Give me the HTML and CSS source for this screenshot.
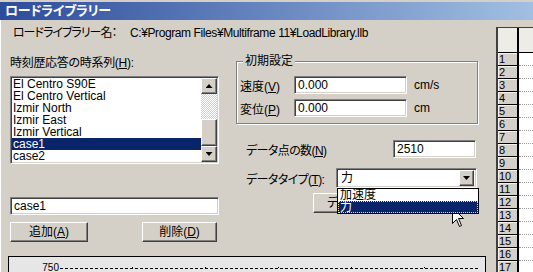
FILE: index.html
```html
<!DOCTYPE html>
<html lang="ja">
<head>
    <meta charset="UTF-8">
    <title>ロードライブラリー</title>
    <link rel="stylesheet" href="styles.css">
</head>
<body>
    <div class="window">
        <div class="titlebar">ロードライブラリー</div>
        <div class="client">
            <div class="dialog">
                <div class="libname">
                    <span class="libname-label">ロードライブラリー名：</span>
                    <span class="libname-path">C:¥Program Files¥Multiframe 11¥LoadLibrary.llb</span>
                </div>
                <div class="columns">
                    <div class="col-left">
                        <div class="caption">時刻歴応答の時系列(<u>H</u>):</div>
                        <div class="listbox">
                            <div class="items">
                                <div class="item">El Centro S90E</div>
                                <div class="item">El Centro Vertical</div>
                                <div class="item">Izmir North</div>
                                <div class="item">Izmir East</div>
                                <div class="item">Izmir Vertical</div>
                                <div class="item selected">case1</div>
                                <div class="item">case2</div>
                            </div>
                            <div class="vscroll">
                                <div class="sb-btn"><span class="tri-up"></span></div>
                                <div class="sb-track sb-before"></div>
                                <div class="sb-thumb"></div>
                                <div class="sb-track"></div>
                                <div class="sb-btn"><span class="tri-down"></span></div>
                            </div>
                        </div>
                        <div class="edit name-edit">case1</div>
                        <div class="buttons">
                            <div class="button add-btn">追加(<u>A</u>)</div>
                            <div class="button del-btn">削除(<u>D</u>)</div>
                        </div>
                    </div>
                    <div class="col-right">
                        <div class="group">
                            <div class="group-title">初期設定</div>
                            <div class="group-rows">
                                <div class="frow">
                                    <span class="flabel">速度(<u>V</u>)</span>
                                    <div class="edit init-edit">0.000</div>
                                    <span class="unit">cm/s</span>
                                </div>
                                <div class="frow">
                                    <span class="flabel">変位(<u>P</u>)</span>
                                    <div class="edit init-edit">0.000</div>
                                    <span class="unit">cm</span>
                                </div>
                            </div>
                        </div>
                        <div class="drow points-row">
                            <span class="dlabel">データ点の数(<u>N</u>)</span>
                            <div class="edit points-edit">2510</div>
                        </div>
                        <div class="drow type-row">
                            <span class="dlabel">データタイプ(<u>T</u>):</span>
                            <div class="combo">
                                <span class="combo-text">力</span>
                                <div class="sb-btn combo-btn"><span class="tri-down"></span></div>
                                <div class="dropdown">
                                    <div class="dd-item">加速度</div>
                                    <div class="dd-item selected">力</div>
                                </div>
                            </div>
                        </div>
                        <div class="button data-btn">データ表示</div>
                    </div>
                </div>
                <div class="chart">
                    <div class="axis-row">
                        <span class="axis-label">750</span>
                        <span class="gridline"></span>
                    </div>
                </div>
            </div>
            <div class="sheet">
                <div class="grid">
                    <div class="grid-head">
                        <div class="rh head-corner"></div>
                        <div class="head-cell"></div>
                    </div>
                    <div class="grow"><div class="rh">1</div><div class="cell"></div></div>
                    <div class="grow"><div class="rh">2</div><div class="cell"></div></div>
                    <div class="grow"><div class="rh">3</div><div class="cell"></div></div>
                    <div class="grow"><div class="rh">4</div><div class="cell"></div></div>
                    <div class="grow"><div class="rh">5</div><div class="cell"></div></div>
                    <div class="grow"><div class="rh">6</div><div class="cell"></div></div>
                    <div class="grow"><div class="rh">7</div><div class="cell"></div></div>
                    <div class="grow"><div class="rh">8</div><div class="cell"></div></div>
                    <div class="grow"><div class="rh">9</div><div class="cell"></div></div>
                    <div class="grow"><div class="rh">10</div><div class="cell"></div></div>
                    <div class="grow"><div class="rh">11</div><div class="cell"></div></div>
                    <div class="grow"><div class="rh">12</div><div class="cell"></div></div>
                    <div class="grow"><div class="rh">13</div><div class="cell"></div></div>
                    <div class="grow"><div class="rh">14</div><div class="cell"></div></div>
                    <div class="grow"><div class="rh">15</div><div class="cell"></div></div>
                    <div class="grow"><div class="rh">16</div><div class="cell"></div></div>
                    <div class="grow"><div class="rh">17</div><div class="cell"></div></div>
                </div>
            </div>
        </div>
        <svg class="cursor" width="13" height="21" viewBox="0 0 13 21">
            <path d="M0.5 0.5 V16.5 L4.5 12.5 L7.5 19.5 L9.5 18.5 L6.5 11.5 H11.5 Z" fill="#fff" stroke="#000" stroke-linejoin="miter"/>
        </svg>
    </div>
</body>
</html>
```

FILE: styles.css
```css
* {
    box-sizing: border-box;
}
body {
    margin: 0;
    font-family: "Liberation Sans", "Noto Sans CJK JP", sans-serif;
    font-size: 12px;
    color: #000;
    font-feature-settings: "palt";
}
u {
    text-decoration: underline;
}
.window {
    position: relative;
    width: 533px;
    height: 272px;
    overflow: hidden;
    background: #d4d0c8;
    padding-top: 2px;
}
.titlebar {
    height: 18px;
    line-height: 18px;
    padding-left: 5px;
    color: #fff;
    font-size: 13px;
    font-weight: bold;
    letter-spacing: -0.3px;
    background: linear-gradient(to right, #2c4c9c, #a2bfe2);
}
.client {
    display: flex;
    height: 252px;
}
.dialog {
    flex: none;
    width: 486px;
    border-left: 1px solid #fff;
}
.libname {
    display: flex;
    margin-top: 6px;
    padding-left: 12px;
    line-height: 14px;
    white-space: nowrap;
}
.libname-label {
    flex: none;
    width: 117px;
    letter-spacing: -1px;
}
.libname-path {
    letter-spacing: -0.4px;
}
.columns {
    display: flex;
    padding-left: 9px;
}
.col-left {
    flex: none;
    width: 209px;
}
.col-right {
    flex: none;
    width: 242px;
    margin-left: 17px;
}
.caption {
    margin-top: 16px;
    line-height: 14px;
    letter-spacing: -0.3px;
}

/* sunken / raised 3d edges */
.edit, .listbox, .combo {
    background: #fff;
    border: 1px solid;
    border-color: #808080 #fff #fff #808080;
    box-shadow: inset 1px 1px #404040, inset -1px -1px #d4d0c8;
}
.button, .sb-btn {
    background: #d4d0c8;
    border: 1px solid;
    border-color: #fff #404040 #404040 #fff;
    box-shadow: inset -1px -1px #808080;
}
.edit {
    height: 18px;
    padding: 0 3px;
    line-height: 16px;
    white-space: nowrap;
}

.listbox {
    display: flex;
    height: 88px;
    margin-top: 6px;
    padding: 1px;
}
.items {
    flex: 1;
    overflow: hidden;
}
.item {
    height: 12px;
    line-height: 12px;
    padding-left: 1px;
    white-space: nowrap;
}
.item.selected {
    background: #0a246a;
    color: #fff;
}
.vscroll {
    display: flex;
    flex-direction: column;
    width: 16px;
}
.sb-btn {
    display: flex;
    align-items: center;
    justify-content: center;
    height: 16px;
    flex: none;
}
.sb-track {
    flex: 1;
    background: repeating-conic-gradient(#fff 0 25%, #d4d0c8 0 50%) 0 0 / 2px 2px;
}
.sb-before {
    flex: none;
    height: 25px;
}
.sb-thumb {
    height: 27px;
    flex: none;
    background: #d4d0c8;
    border: 1px solid;
    border-color: #fff #404040 #404040 #fff;
    box-shadow: inset -1px -1px #808080;
}
.tri-up, .tri-down {
    width: 7px;
    height: 4px;
    background: #000;
}
.tri-up {
    clip-path: polygon(50% 0, 100% 100%, 0 100%);
}
.tri-down {
    clip-path: polygon(0 0, 100% 0, 50% 100%);
}

.name-edit {
    margin-top: 33px;
}
.buttons {
    display: flex;
    justify-content: space-between;
    width: 207px;
    margin-top: 7px;
}
.button {
    height: 20px;
    line-height: 18px;
    text-align: center;
}
.add-btn {
    width: 78px;
}
.del-btn {
    width: 75px;
}

.group {
    margin-top: 21px;
    border: 1px solid #808080;
    box-shadow: inset 1px 1px #fff, 1px 1px #fff;
    padding: 0 0 6px 3px;
}
.group-title {
    display: table;
    margin: -8px 0 0 3px;
    padding: 0 2px;
    line-height: 14px;
    background: #d4d0c8;
}
.group-rows {
    display: flex;
    flex-direction: column;
    gap: 5px;
    padding-top: 8px;
}
.frow {
    display: flex;
    align-items: center;
    height: 18px;
}
.flabel {
    width: 54px;
}
.init-edit {
    width: 113px;
}
.unit {
    margin-left: 7px;
}

.drow {
    display: flex;
    align-items: center;
}
.dlabel {
    flex: 1;
    padding-left: 10px;
    letter-spacing: -0.6px;
}
.points-row {
    height: 18px;
    margin-top: 16px;
}
.points-edit {
    width: 83px;
    margin-right: 2px;
}
.type-row {
    height: 20px;
    margin-top: 10px;
}
.combo {
    position: relative;
    display: flex;
    align-items: center;
    width: 141px;
    height: 20px;
    margin-right: 1px;
    padding: 2px;
}
.combo-text {
    flex: 1;
    padding-left: 2px;
    line-height: 16px;
}
.combo-btn {
    width: 15px;
}
.dropdown {
    position: absolute;
    z-index: 2;
    left: 0;
    top: 19px;
    width: 142px;
    background: #fff;
    border: 1px solid #000;
}
.dd-item {
    height: 12px;
    line-height: 12px;
    padding-left: 2px;
}
.dd-item.selected {
    background: #0a246a;
    color: #fff;
    outline: 1px dotted #e8e4a0;
    outline-offset: -1px;
}
.data-btn {
    width: 110px;
    margin: 5px 0 0 77px;
    padding-left: 13px;
    text-align: left;
}

.chart {
    width: 478px;
    height: 40px;
    margin: 14px 0 0 7px;
    padding-top: 6px;
    border: 1px solid #000;
    background: #e6e6e6;
}
.axis-row {
    display: flex;
    align-items: center;
    height: 9px;
}
.axis-label {
    width: 51px;
    padding-right: 1px;
    text-align: right;
    font-size: 10px;
    line-height: 9px;
}
.gridline {
    flex: 1;
    height: 2px;
    margin-right: 7px;
    background:
        repeating-linear-gradient(to right, transparent 0 72px, #000 72px 73px, transparent 73px 69px) 0 0 / 100% 1px no-repeat,
        repeating-linear-gradient(to right, #000 0 3px, transparent 3px 5px) 0 1px / 100% 1px no-repeat;
}

.sheet {
    flex: 1;
    padding: 7px 0 0 10px;
}
.grid {
    border-top: 1px solid #404040;
    border-left: 2px solid #404040;
    background: #fff;
}
.grid-head {
    display: flex;
    height: 25px;
    border-bottom: 1px solid #000;
}
.rh {
    flex: none;
    width: 21px;
    padding-left: 1px;
    background: #d4d0c8;
    border-right: 2px solid #000;
    font-size: 11px;
    line-height: 12px;
}
.head-corner, .head-cell {
    background: #eeece6;
}
.head-cell {
    flex: 1;
}
.grow {
    display: flex;
    height: 13px;
}
.grow .rh {
    border-bottom: 1px solid #000;
    box-shadow: inset 1px 1px #f4f2ee;
}
.cell {
    flex: 1;
    border-bottom: 1px dotted #9a9a9a;
}

.cursor {
    position: absolute;
    left: 452px;
    top: 207px;
}
```
